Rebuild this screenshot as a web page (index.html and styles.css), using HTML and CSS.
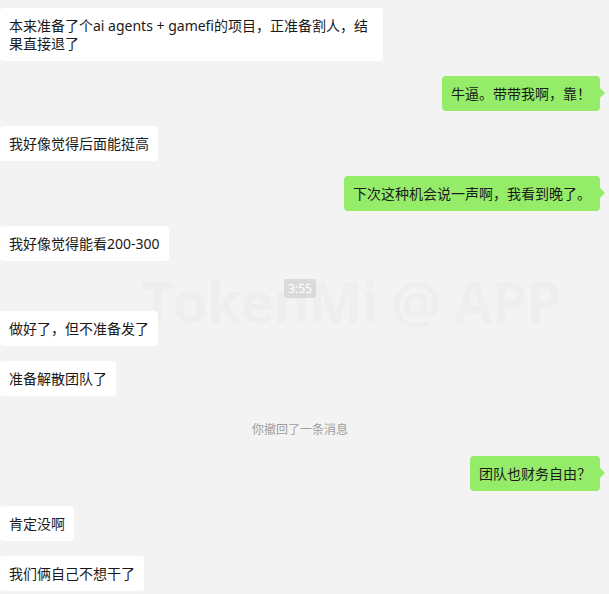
FILE: index.html
```html
<!DOCTYPE html>
<html lang="zh-CN">
<head>
    <meta charset="UTF-8">
    <meta name="viewport" content="width=device-width, initial-scale=1.0">
    <title>聊天记录</title>
    <link rel="stylesheet" href="styles.css">
</head>
<body>
    <div class="chat">
        <div class="watermark">TokenMi @ APP</div>

        <div class="msg left"><div class="bubble wide">本来准备了个ai agents + gamefi的项目，正准备割人，结果直接退了</div></div>
        <div class="msg right"><div class="bubble">牛逼。带带我啊，靠！</div></div>
        <div class="msg left"><div class="bubble">我好像觉得后面能挺高</div></div>
        <div class="msg right"><div class="bubble">下次这种机会说一声啊，我看到晚了。</div></div>
        <div class="msg left"><div class="bubble">我好像觉得能看200-300</div></div>

        <div class="time"><span>3:55</span></div>

        <div class="msg left"><div class="bubble">做好了，但不准备发了</div></div>
        <div class="msg left"><div class="bubble">准备解散团队了</div></div>

        <div class="notice">你撤回了一条消息</div>

        <div class="msg right"><div class="bubble">团队也财务自由？</div></div>
        <div class="msg left"><div class="bubble">肯定没啊</div></div>
        <div class="msg left"><div class="bubble">我们俩自己不想干了</div></div>
    </div>
</body>
</html>
```

FILE: styles.css
```css
* {
    box-sizing: border-box;
}
body {
    margin: 0;
    background-color: #f3f3f3;
    font-family: "Noto Sans", "Noto Sans CJK SC", sans-serif;
    color: #1a1a1a;
}
.chat {
    position: relative;
    width: 600px;
    padding-top: 8px;
    display: flex;
    flex-direction: column;
    gap: 15px;
}
/* faint brand mark behind the messages */
.watermark {
    position: absolute;
    left: 141px;
    top: 266px;
    font-family: "Open Sans", sans-serif;
    font-weight: 700;
    font-size: 57px;
    line-height: 70px;
    letter-spacing: -1.4px;
    color: rgba(0, 0, 0, 0.02);
    white-space: nowrap;
    pointer-events: none;
}
.msg {
    display: flex;
}
.msg.left {
    justify-content: flex-start;
}
.msg.right {
    justify-content: flex-end;
}
.bubble {
    position: relative;
    background-color: #fff;
    border-radius: 4px;
    padding: 8.5px 9px;
    font-size: 14px;
    line-height: 18px;
}
.bubble.wide {
    max-width: 383px;
}
.right .bubble {
    background-color: #95ec69;
}
.right .bubble::after {
    content: "";
    position: absolute;
    right: -5px;
    top: 12px;
    border-top: 5px solid transparent;
    border-bottom: 5px solid transparent;
    border-left: 5px solid #95ec69;
}
.time {
    display: flex;
    justify-content: center;
    margin: 3px 0 -2px;
}
.time span {
    position: relative;
    background-color: #dadada;
    color: #fff;
    font-size: 12px;
    line-height: 19px;
    padding: 0 4px;
    border-radius: 2px;
}
.notice {
    text-align: center;
    font-size: 12px;
    line-height: 17px;
    color: #9e9e9e;
    margin: 10px 0 3px;
}
```
